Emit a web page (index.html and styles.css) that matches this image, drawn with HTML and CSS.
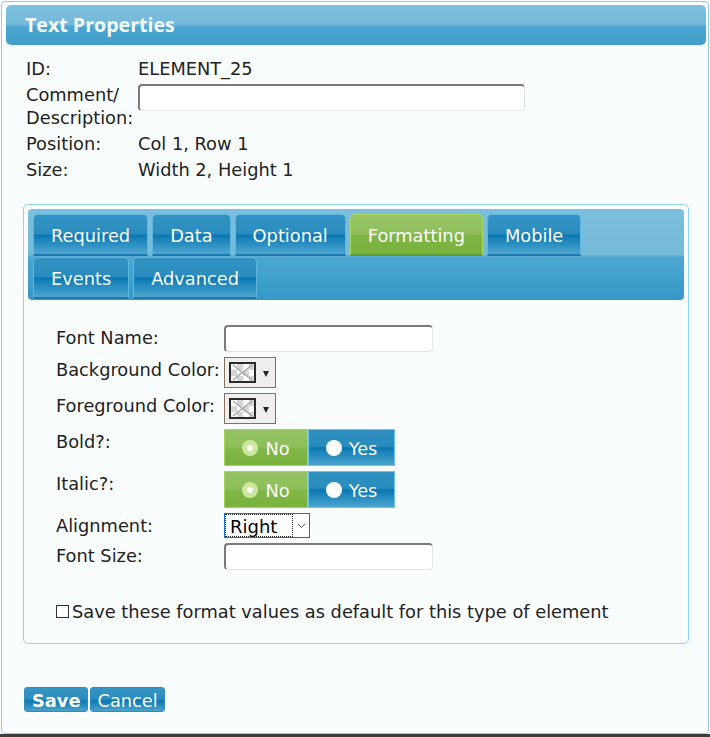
FILE: index.html
```html
<!DOCTYPE html>
<html lang="en">
<head>
    <meta charset="UTF-8">
    <meta name="viewport" content="width=device-width, initial-scale=1.0">
    <title>Text Properties</title>
    <link rel="stylesheet" href="styles.css">
</head>
<body>
    <div class="dialog">
        <div class="titlebar">Text Properties</div>

        <div class="info">
            <div class="info-label">ID:</div>
            <div>ELEMENT_25</div>
            <div class="info-label">Comment/<br>Description:</div>
            <div><input type="text" class="text-input comment-input"></div>
            <div class="info-label">Position:</div>
            <div>Col 1, Row 1</div>
            <div class="info-label">Size:</div>
            <div>Width 2, Height 1</div>
        </div>

        <div class="tab-panel">
            <div class="tab-bar">
                <div class="tab-row">
                    <div class="tab">Required</div>
                    <div class="tab">Data</div>
                    <div class="tab">Optional</div>
                    <div class="tab active">Formatting</div>
                    <div class="tab">Mobile</div>
                </div>
                <div class="tab-row">
                    <div class="tab">Events</div>
                    <div class="tab">Advanced</div>
                </div>
            </div>

            <div class="form">
                <div class="form-label">Font Name:</div>
                <div><input type="text" class="text-input"></div>

                <div class="form-label">Background Color:</div>
                <div class="color-pick">
                    <span class="swatch">
                        <svg width="23" height="17" viewBox="0 0 23 17">
                            <line x1="2" y1="1" x2="21" y2="16" stroke="#a3a3a3" stroke-width="1.3"/>
                            <line x1="21" y1="1" x2="2" y2="16" stroke="#a3a3a3" stroke-width="1.3"/>
                        </svg>
                    </span>
                    <span class="drop-arrow"></span>
                </div>

                <div class="form-label">Foreground Color:</div>
                <div class="color-pick">
                    <span class="swatch">
                        <svg width="23" height="17" viewBox="0 0 23 17">
                            <line x1="2" y1="1" x2="21" y2="16" stroke="#a3a3a3" stroke-width="1.3"/>
                            <line x1="21" y1="1" x2="2" y2="16" stroke="#a3a3a3" stroke-width="1.3"/>
                        </svg>
                    </span>
                    <span class="drop-arrow"></span>
                </div>

                <div class="form-label">Bold?:</div>
                <div class="radio-group">
                    <div class="radio-btn on"><span class="radio-dot"></span>No</div>
                    <div class="radio-btn"><span class="radio-dot"></span>Yes</div>
                </div>

                <div class="form-label">Italic?:</div>
                <div class="radio-group">
                    <div class="radio-btn on"><span class="radio-dot"></span>No</div>
                    <div class="radio-btn"><span class="radio-dot"></span>Yes</div>
                </div>

                <div class="form-label">Alignment:</div>
                <div>
                    <div class="select-box">
                        <span class="select-value">Right</span>
                        <svg class="chevron" width="9" height="6" viewBox="0 0 9 6">
                            <polyline points="1,1 4.5,4.5 8,1" fill="none" stroke="#555" stroke-width="1"/>
                        </svg>
                    </div>
                </div>

                <div class="form-label">Font Size:</div>
                <div><input type="text" class="text-input"></div>
            </div>

            <label class="default-check"><span class="check-box"></span>Save these format values as default for this type of element</label>
        </div>

        <div class="actions">
            <button class="btn save">Save</button>
            <button class="btn">Cancel</button>
        </div>
    </div>
</body>
</html>
```

FILE: styles.css
```css
html {
    background: #ffffff;
}
body {
    margin: 0;
    height: 734px;
    overflow: hidden;
    border-bottom: 3px solid #3c3c3c;
    font-family: "DejaVu Sans", Verdana, sans-serif;
    font-size: 17.8px;
    color: #222;
}
.dialog {
    box-sizing: border-box;
    width: 708px;
    height: 733px;
    margin: 1px 1px 0 1px;
    border: 1px solid #8ccdf0;
    border-radius: 4px;
    background: #fafdfd;
}
.titlebar {
    height: 40px;
    margin: 3px 2px 0 4px;
    padding-left: 19px;
    border-radius: 5px;
    background: linear-gradient(to bottom, #7ec0df 0%, #74b9da 48%, #4aa6d0 55%, #3f9fcb 100%);
    color: #f4f9fc;
    font-family: "Open Sans", sans-serif;
    font-weight: 700;
    font-size: 19.6px;
    line-height: 40px;
}

/* element info */
.info {
    display: grid;
    grid-template-columns: 112px auto;
    row-gap: 3px;
    margin: 12px 0 0 24px;
    line-height: 23px;
}
.text-input {
    box-sizing: border-box;
    width: 209px;
    height: 27px;
    margin: 0;
    border: 1px solid #e6e6e6;
    border-top: 2px solid #7a7a7a;
    border-left: 2px solid #7a7a7a;
    border-radius: 4px;
    background: #fff;
    display: block;
}
.comment-input {
    width: 387px;
    margin-top: 1px;
}

/* tabs */
.tab-panel {
    box-sizing: border-box;
    width: 666px;
    margin: 23px 0 0 21px;
    padding: 4px 4px 20px;
    border: 1px solid #8fd4f2;
    border-radius: 5px;
}
.tab-bar {
    padding: 5px 0 1px 5px;
    border-radius: 4px;
    background: linear-gradient(to bottom, #7cbfde 0%, #74badb 50%, #4ba7d1 53%, #3598c7 100%);
}
.tab-row {
    display: flex;
    gap: 4px;
}
.tab-row + .tab-row {
    margin-top: 1px;
}
.tab {
    box-sizing: border-box;
    height: 42px;
    padding: 2px 17px 0;
    border: 1px solid #5cb6e0;
    border-bottom: 2px solid #1c78ad;
    border-radius: 5px 5px 0 0;
    background: linear-gradient(to bottom, #3392c2 0%, #2b8dbf 47%, #0a77b2 52%, #1681b9 60%, #4ea6cf 100%);
    color: #fff;
    line-height: 38px;
}
.tab.active {
    border-color: #a9d85a;
    border-bottom-color: #5e9c2b;
    background: linear-gradient(to bottom, #97c465 0%, #90bf5c 47%, #7fb545 52%, #79b23c 100%);
}

/* formatting form */
.form {
    display: grid;
    grid-template-columns: 168px auto;
    row-gap: 5px;
    align-items: start;
    margin: 25px 0 0 28px;
    line-height: 23px;
}
.form-label {
    padding-top: 1px;
}
.color-pick {
    box-sizing: border-box;
    width: 52px;
    height: 31px;
    padding: 4px 0 0 4px;
    display: flex;
    align-items: flex-start;
    border: 1px solid #8d6f58;
    background: #efefef;
}
.swatch {
    display: block;
    width: 23px;
    height: 17px;
    border: 2px solid #2a2a2a;
    background-color: #fff;
    background-image:
        linear-gradient(45deg, #d6d6d6 25%, transparent 25%, transparent 75%, #d6d6d6 75%),
        linear-gradient(45deg, #d6d6d6 25%, transparent 25%, transparent 75%, #d6d6d6 75%);
    background-size: 12px 12px;
    background-position: 0 0, 6px 6px;
}
.swatch svg {
    display: block;
}
.drop-arrow {
    width: 0;
    height: 0;
    margin: 9px 0 0 7px;
    border-left: 3px solid transparent;
    border-right: 3px solid transparent;
    border-top: 6px solid #222;
}
.radio-group {
    display: flex;
    height: 37px;
}
.radio-btn {
    box-sizing: border-box;
    display: flex;
    align-items: center;
    justify-content: center;
    gap: 7px;
    width: 87px;
    height: 37px;
    padding-top: 2px;
    border: 1px solid #6ac8f0;
    background: linear-gradient(to bottom, #2e8fc0 0%, #2b8dbf 45%, #0a77b2 52%, #1983ba 62%, #4ba4cd 100%);
    color: #fff;
}
.radio-btn.on {
    width: 84px;
    border-color: #a6d652;
    background: linear-gradient(to bottom, #95c363 0%, #8fc05b 45%, #80b646 55%, #79b23c 100%);
}
.radio-dot {
    box-sizing: border-box;
    width: 16px;
    height: 16px;
    margin-top: -2px;
    border-radius: 50%;
    background: #fff;
}
.on .radio-dot {
    border: 5px solid #cde79f;
}
.select-box {
    box-sizing: border-box;
    display: flex;
    align-items: center;
    width: 86px;
    height: 25px;
    padding: 1px;
    border: 1px solid #0b78d4;
    background: #fff;
}
.select-value {
    box-sizing: border-box;
    width: 66px;
    height: 21px;
    padding: 1px 0 0 4px;
    outline: 1px dotted #222;
    color: #000;
    font-size: 18px;
    line-height: 21px;
}
.chevron {
    margin-left: 5px;
}
.default-check {
    display: flex;
    align-items: center;
    margin: 30px 0 0 28px;
    line-height: 23px;
}
.check-box {
    box-sizing: border-box;
    width: 13px;
    height: 13px;
    margin-right: 3px;
    border: 1px solid #333;
    background: #fff;
}

/* buttons */
.actions {
    display: flex;
    gap: 2px;
    margin: 43px 0 0 22px;
}
.btn {
    box-sizing: border-box;
    height: 25px;
    padding: 2px 6px 0;
    border: 1px solid #2f8dc0;
    border-radius: 3px;
    background: linear-gradient(to bottom, #3594c3 0%, #2a8cbe 48%, #0b78b2 55%, #4aa3cc 100%);
    color: #fff;
    font-family: "DejaVu Sans", Verdana, sans-serif;
    font-size: 17.8px;
    line-height: 20px;
}
.btn.save {
    padding: 2px 7px 0;
    font-weight: 700;
}
```
